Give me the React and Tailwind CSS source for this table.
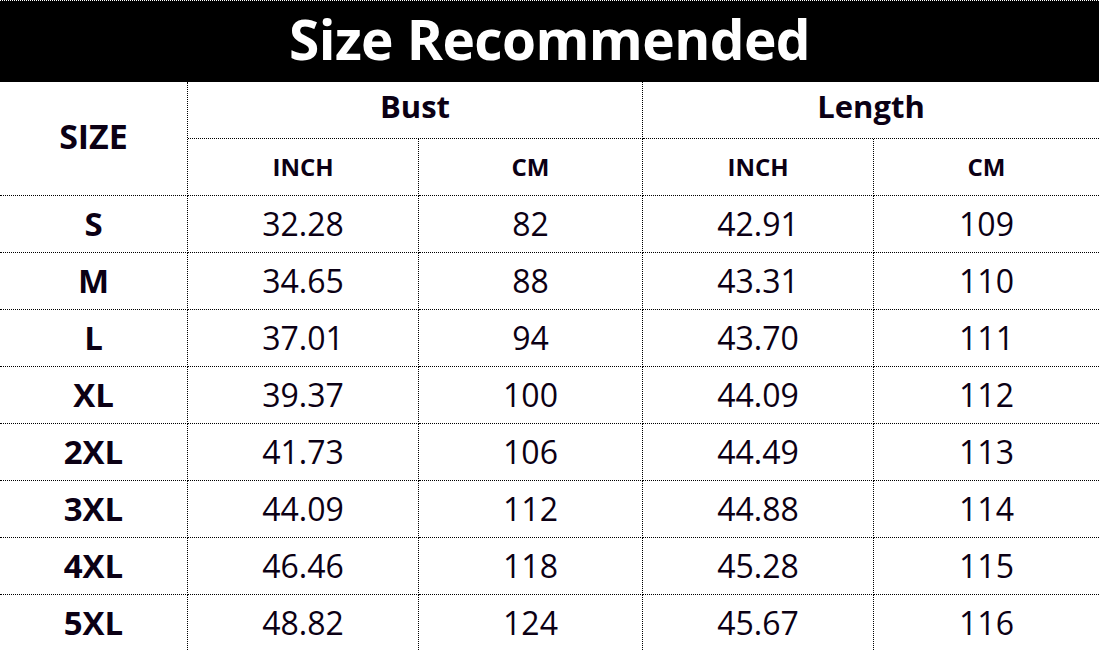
const rows = [
    ['S', '32.28', '82', '42.91', '109'],
    ['M', '34.65', '88', '43.31', '110'],
    ['L', '37.01', '94', '43.70', '111'],
    ['XL', '39.37', '100', '44.09', '112'],
    ['2XL', '41.73', '106', '44.49', '113'],
    ['3XL', '44.09', '112', '44.88', '114'],
    ['4XL', '46.46', '118', '45.28', '115'],
    ['5XL', '48.82', '124', '45.67', '116'],
]

const cell = 'flex items-center justify-center border-b border-dotted border-black'

const App = () => {
    return (
        <div
            className="w-[1099px] h-[651px] overflow-hidden bg-white text-[#0b0014]"
            style={{ fontFamily: '"Open Sans", "Noto Sans", sans-serif' }}
        >
            <div className="h-[82px] bg-black border-t border-dotted border-white flex items-center justify-center">
                <h1 className="text-white font-bold text-[55px] leading-none tracking-[-0.6px] pb-1.5">
                    Size Recommended
                </h1>
            </div>

            <div className="grid grid-cols-[188px_231px_224px_231px_225px] auto-rows-[57px]">
                <div className={`${cell} row-span-2 border-r text-[34px] font-bold pb-1`}>SIZE</div>
                <div className={`${cell} col-span-2 border-r text-[31px] font-bold pb-2`}>Bust</div>
                <div className={`${cell} col-span-2 text-[31px] font-bold pb-2`}>Length</div>
                <div className={`${cell} border-r text-[24px] font-bold`}>INCH</div>
                <div className={`${cell} border-r text-[24px] font-bold`}>CM</div>
                <div className={`${cell} border-r text-[24px] font-bold`}>INCH</div>
                <div className={`${cell} text-[24px] font-bold`}>CM</div>

                {rows.map((r) =>
                    r.map((v, i) => (
                        <div
                            key={r[0] + i}
                            className={`${cell} ${i < 4 ? 'border-r' : ''} ${i === 0 ? 'font-bold text-[33px]' : 'text-[32px]'}`}
                        >
                            {v}
                        </div>
                    ))
                )}
            </div>
        </div>
    )
}

export default App
